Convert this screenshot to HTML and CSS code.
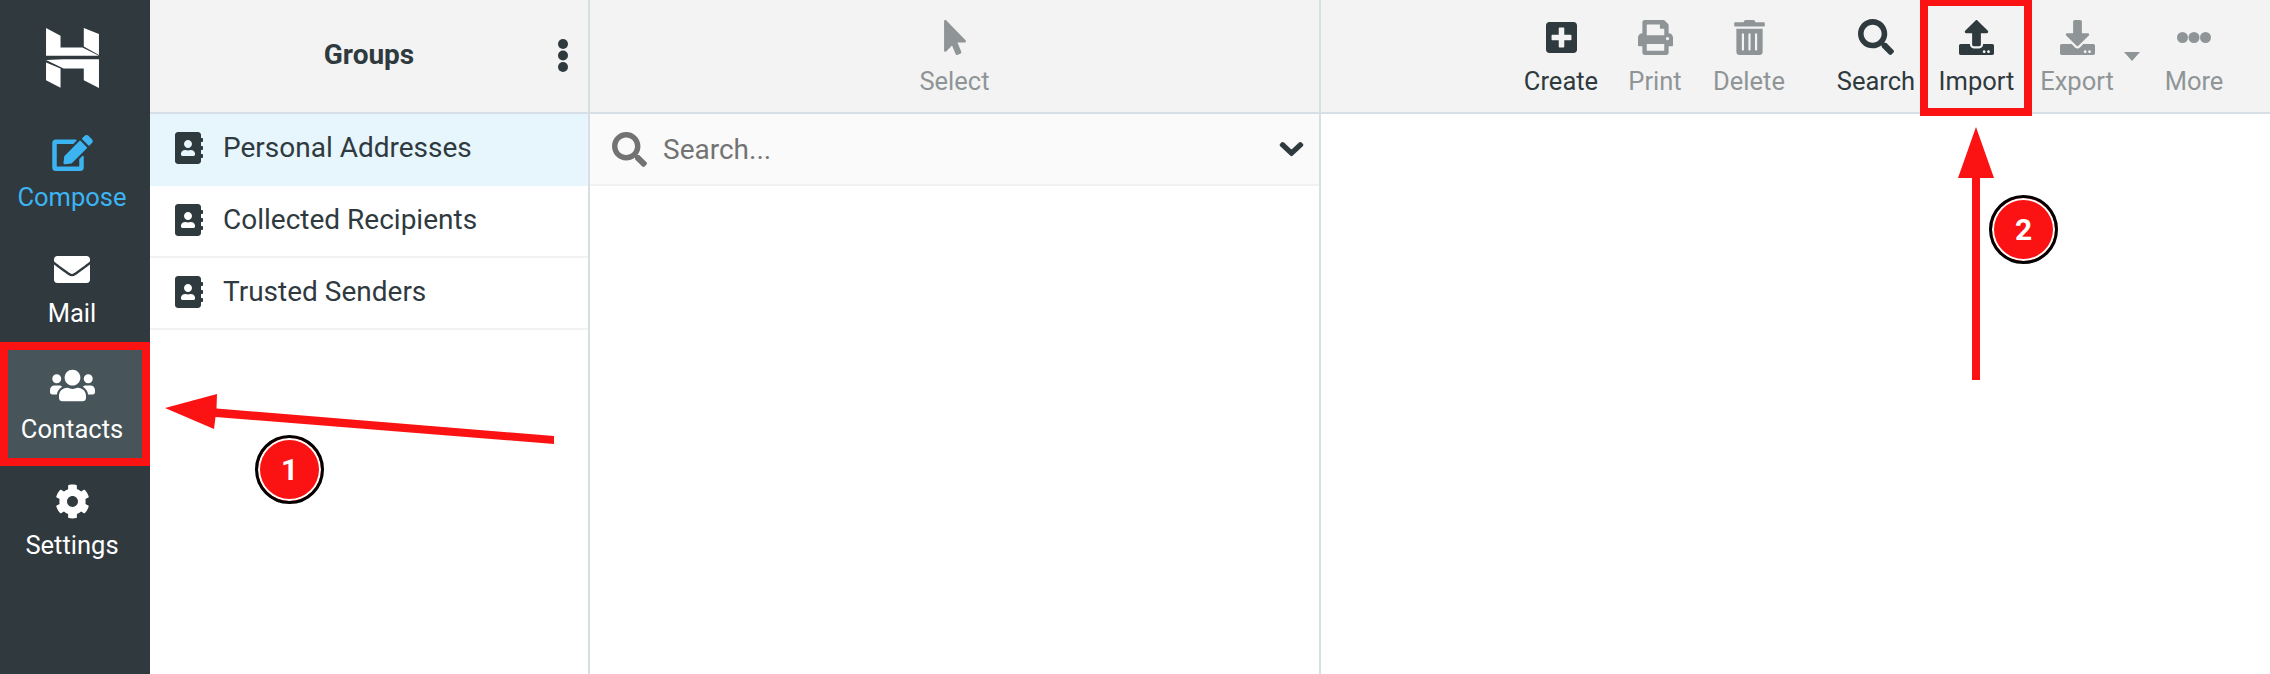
FILE: index.html
```html
<!DOCTYPE html>
<html lang="en">
<head>
<meta charset="utf-8">
<title>Contacts</title>
<link rel="stylesheet" href="styles.css">
</head>
<body>
<div class="app">
  <nav class="sidebar">
    <div class="logo">
      <svg class="logo-svg" viewBox="138 85 157 178"><path d="M138 85l43 23v35h65l49 24H138zM250 85l45 18v62l-45-25zM138 187l43 18v57l-43-22zM138 180l52 25h60v35l45 23v-85H190z"/></svg>
    </div>
    <a class="nav-item nav-compose">
      <span class="nav-icon"><svg class="i-compose" viewBox="0 0 576 512"><path d="M402.6 83.2l90.2 90.2c3.8 3.8 3.8 10 0 13.8L274.4 405.6l-92.8 10.3c-12.4 1.4-22.9-9.1-21.5-21.5l10.3-92.8L388.8 83.2c3.8-3.8 10-3.8 13.8 0zm162-22.9l-48.8-48.8c-15.2-15.2-39.9-15.2-55.2 0l-35.4 35.4c-3.8 3.8-3.8 10 0 13.8l90.2 90.2c3.8 3.8 10 3.8 13.8 0l35.4-35.4c15.2-15.3 15.2-40 0-55.2zM384 346.2V448H64V128h229.8c3.2 0 6.2-1.3 8.5-3.5l40-40c7.6-7.6 2.2-20.5-8.5-20.5H48C21.5 64 0 85.5 0 112v352c0 26.5 21.5 48 48 48h352c26.5 0 48-21.5 48-48V306.2c0-10.7-12.9-16-20.5-8.5l-40 40c-2.2 2.3-3.5 5.3-3.5 8.5z"/></svg></span>
      <span class="nav-label">Compose</span>
    </a>
    <a class="nav-item">
      <span class="nav-icon"><svg class="i-mail" viewBox="0 64 512 384"><path d="M502.3 190.8c3.9-3.1 9.7-.2 9.7 4.7V400c0 26.5-21.5 48-48 48H48c-26.5 0-48-21.5-48-48V195.6c0-5 5.7-7.8 9.7-4.7 22.4 17.4 52.1 39.5 154.1 113.6 21.1 15.4 56.7 47.8 92.2 47.6 35.7.3 72-32.8 92.3-47.6 102-74.1 131.6-96.3 154-113.7zM256 320c23.2.4 56.6-29.2 73.4-41.4 132.7-96.3 142.8-104.7 173.4-128.7 5.8-4.5 9.2-11.5 9.2-18.9v-19c0-26.5-21.5-48-48-48H48C21.5 64 0 85.5 0 112v19c0 7.4 3.4 14.3 9.2 18.9 30.6 23.9 40.7 32.4 173.4 128.7 16.8 12.2 50.2 41.8 73.4 41.4z"/></svg></span>
      <span class="nav-label">Mail</span>
    </a>
    <a class="nav-item nav-active">
      <span class="nav-icon"><svg class="i-users" viewBox="0 32 640 448"><path d="M96 224c35.3 0 64-28.7 64-64s-28.7-64-64-64-64 28.7-64 64 28.7 64 64 64zm448 0c35.3 0 64-28.7 64-64s-28.7-64-64-64-64 28.7-64 64 28.7 64 64 64zm32 32h-64c-17.6 0-33.5 7.1-45.1 18.6 40.3 22.1 68.9 62 75.1 109.4h66c17.7 0 32-14.3 32-32v-32c0-35.3-28.7-64-64-64zm-256 0c61.9 0 112-50.1 112-112S381.9 32 320 32 208 82.1 208 144s50.1 112 112 112zm76.8 32h-8.3c-20.8 10-43.9 16-68.5 16s-47.6-6-68.5-16h-8.3C179.6 288 128 339.6 128 403.2V432c0 26.5 21.5 48 48 48h288c26.5 0 48-21.5 48-48v-28.8c0-63.6-51.6-115.2-115.2-115.2zm-223.7-13.4C161.5 263.1 145.6 256 128 256H64c-35.3 0-64 28.7-64 64v32c0 17.7 14.3 32 32 32h65.9c6.3-47.4 34.9-87.3 75.2-109.4z"/></svg></span>
      <span class="nav-label">Contacts</span>
    </a>
    <a class="nav-item">
      <span class="nav-icon"><svg class="i-cog" viewBox="0 0 512 512"><path d="M487.4 315.7l-42.6-24.6c4.3-23.2 4.3-47 0-70.2l42.6-24.6c4.9-2.8 7.1-8.6 5.5-14-11.1-35.6-30-67.8-54.7-94.6-3.8-4.1-10-5.1-14.8-2.3L380.8 110c-17.9-15.4-38.5-27.3-60.8-35.1V25.8c0-5.6-3.9-10.5-9.4-11.7-36.7-8.2-74.3-7.8-109.2 0-5.5 1.2-9.4 6.1-9.4 11.7V75c-22.2 7.9-42.8 19.8-60.8 35.1L88.7 85.5c-4.9-2.8-11-1.9-14.8 2.3-24.7 26.7-43.6 58.9-54.7 94.6-1.7 5.4.6 11.2 5.5 14L67.3 221c-4.3 23.2-4.3 47 0 70.2l-42.6 24.6c-4.9 2.8-7.1 8.6-5.5 14 11.1 35.6 30 67.8 54.7 94.6 3.8 4.1 10 5.1 14.8 2.3l42.6-24.6c17.9 15.4 38.5 27.3 60.8 35.1v49.2c0 5.6 3.9 10.5 9.4 11.7 36.7 8.2 74.3 7.8 109.2 0 5.5-1.2 9.4-6.1 9.4-11.7v-49.2c22.2-7.9 42.8-19.8 60.8-35.1l42.6 24.6c4.9 2.8 11 1.9 14.8-2.3 24.7-26.7 43.6-58.9 54.7-94.6 1.5-5.5-.7-11.3-5.6-14.1zM256 336c-44.1 0-80-35.9-80-80s35.9-80 80-80 80 35.9 80 80-35.9 80-80 80z"/></svg></span>
      <span class="nav-label">Settings</span>
    </a>
  </nav>

  <section class="col col-groups">
    <header class="col-head groups-head">
      <h2 class="groups-title">Groups</h2>
      <svg class="i-dots" viewBox="0 0 10 33"><circle cx="5" cy="5" r="5"/><circle cx="5" cy="16.5" r="5"/><circle cx="5" cy="28" r="5"/></svg>
    </header>
    <ul class="group-list">
      <li class="group-row group-row-active"><svg class="i-book" viewBox="0 0 448 512"><use href="#book"/></svg><span>Personal Addresses</span></li>
      <li class="group-row"><svg class="i-book" viewBox="0 0 448 512"><use href="#book"/></svg><span>Collected Recipients</span></li>
      <li class="group-row"><svg class="i-book" viewBox="0 0 448 512"><use href="#book"/></svg><span>Trusted Senders</span></li>
    </ul>
  </section>

  <section class="col col-list">
    <header class="col-head list-head">
      <button class="tool tool-off">
        <span class="tool-icon"><svg class="i-pointer" viewBox="0 0 320 512"><path d="M302.189 329.126H196.105l55.831 135.993c3.889 9.428-.555 19.999-9.444 23.999l-49.165 21.427c-9.165 4-19.443-.571-23.332-9.714l-53.053-129.136-86.664 89.138C18.729 472.71 0 463.554 0 447.977V18.299C0 1.899 19.921-6.096 30.277 5.443l284.412 292.542c11.472 11.179 3.007 31.141-12.5 31.141z"/></svg></span>
        <span class="tool-label">Select</span>
      </button>
    </header>
    <div class="search-row">
      <svg class="i-search-field" viewBox="0 0 512 512"><use href="#search"/></svg>
      <span class="search-text">Search...</span>
      <svg class="i-chevron" viewBox="0 110 448 290" preserveAspectRatio="none"><path d="M207.029 381.476L12.686 187.132c-9.373-9.373-9.373-24.569 0-33.941l22.667-22.667c9.357-9.357 24.522-9.375 33.901-.04L224 284.505l154.745-154.021c9.379-9.335 24.544-9.317 33.901.04l22.667 22.667c9.373 9.373 9.373 24.569 0 33.941L240.971 381.476c-9.373 9.372-24.569 9.372-33.942 0z"/></svg>
    </div>
  </section>

  <section class="col col-detail">
    <header class="col-head toolbar">
      <button class="tool">
        <span class="tool-icon"><svg class="i-plus" viewBox="0 32 448 448"><path d="M400 32H48C21.5 32 0 53.5 0 80v352c0 26.5 21.5 48 48 48h352c26.5 0 48-21.5 48-48V80c0-26.5-21.5-48-48-48zm-32 252c0 6.6-5.4 12-12 12h-92v92c0 6.6-5.4 12-12 12h-56c-6.6 0-12-5.4-12-12v-92H92c-6.6 0-12-5.4-12-12v-56c0-6.6 5.4-12 12-12h92v-92c0-6.6 5.4-12 12-12h56c6.6 0 12 5.4 12 12v92h92c6.6 0 12 5.4 12 12v56z"/></svg></span>
        <span class="tool-label">Create</span>
      </button>
      <button class="tool tool-off">
        <span class="tool-icon"><svg class="i-print" viewBox="0 0 512 512"><path d="M448 192V77.25c0-8.49-3.37-16.62-9.37-22.63L393.37 9.37c-6-6-14.14-9.37-22.63-9.37H96C78.33 0 64 14.33 64 32v160c-35.35 0-64 28.65-64 64v112c0 8.84 7.16 16 16 16h48v96c0 17.67 14.33 32 32 32h320c17.67 0 32-14.33 32-32v-96h48c8.84 0 16-7.16 16-16V256c0-35.35-28.65-64-64-64zm-64 256H128v-96h256v96zm0-224H128V64h192v48c0 8.84 7.16 16 16 16h48v96zm48 72c-13.25 0-24-10.75-24-24 0-13.26 10.75-24 24-24s24 10.74 24 24c0 13.25-10.75 24-24 24z"/></svg></span>
        <span class="tool-label">Print</span>
      </button>
      <button class="tool tool-off">
        <span class="tool-icon"><svg class="i-trash" viewBox="0 0 448 512"><path d="M32 464a48 48 0 0 0 48 48h288a48 48 0 0 0 48-48V128H32zm272-256a16 16 0 0 1 32 0v224a16 16 0 0 1-32 0zm-96 0a16 16 0 0 1 32 0v224a16 16 0 0 1-32 0zm-96 0a16 16 0 0 1 32 0v224a16 16 0 0 1-32 0zM432 32H312l-9.4-18.7A24 24 0 0 0 281.1 0H166.8a23.72 23.72 0 0 0-21.4 13.3L136 32H16A16 16 0 0 0 0 48v32a16 16 0 0 0 16 16h416a16 16 0 0 0 16-16V48a16 16 0 0 0-16-16z"/></svg></span>
        <span class="tool-label">Delete</span>
      </button>
      <button class="tool tool-search">
        <span class="tool-icon"><svg class="i-search" viewBox="0 0 512 512"><use href="#search"/></svg></span>
        <span class="tool-label">Search</span>
      </button>
      <button class="tool tool-import">
        <span class="tool-icon"><svg class="i-load" viewBox="0 0 512 512"><path d="M296 384h-80c-13.3 0-24-10.7-24-24V192h-87.7c-17.8 0-26.7-21.5-14.1-34.1L242.3 5.7c7.5-7.5 19.8-7.5 27.3 0l152.2 152.2c12.6 12.6 3.7 34.1-14.1 34.1H320v168c0 13.3-10.7 24-24 24zm216-8v112c0 13.3-10.7 24-24 24H24c-13.3 0-24-10.7-24-24V376c0-13.3 10.7-24 24-24h136v8c0 30.9 25.1 56 56 56h80c30.9 0 56-25.1 56-56v-8h136c13.3 0 24 10.7 24 24zm-124 88c0-11-9-20-20-20s-20 9-20 20 9 20 20 20 20-9 20-20zm64 0c0-11-9-20-20-20s-20 9-20 20 9 20 20 20 20-9 20-20z"/></svg></span>
        <span class="tool-label">Import</span>
      </button>
      <button class="tool tool-off tool-export">
        <span class="tool-icon"><svg class="i-load" viewBox="0 0 512 512"><path d="M216 0h80c13.3 0 24 10.7 24 24v168h87.7c17.8 0 26.7 21.5 14.1 34.1L269.7 378.3c-7.5 7.5-19.8 7.5-27.3 0L90.1 226.1c-12.6-12.6-3.7-34.1 14.1-34.1H192V24c0-13.3 10.7-24 24-24zm296 376v112c0 13.3-10.7 24-24 24H24c-13.3 0-24-10.7-24-24V376c0-13.3 10.7-24 24-24h146.7l49 49c20.1 20.1 52.5 20.1 72.6 0l49-49H488c13.3 0 24 10.7 24 24zm-124 88c0-11-9-20-20-20s-20 9-20 20 9 20 20 20 20-9 20-20zm64 0c0-11-9-20-20-20s-20 9-20 20 9 20 20 20 20-9 20-20z"/></svg></span>
        <span class="tool-label">Export</span>
      </button>
      <span class="caret"></span>
      <button class="tool tool-off">
        <span class="tool-icon"><svg class="i-more" viewBox="0 0 34 11"><circle cx="5.5" cy="5.5" r="5.5"/><circle cx="17" cy="5.5" r="5.5"/><circle cx="28.5" cy="5.5" r="5.5"/></svg></span>
        <span class="tool-label">More</span>
      </button>
    </header>
  </section>

  <svg class="defs" aria-hidden="true">
    <symbol id="book" viewBox="0 0 448 512"><path d="M436 160c6.6 0 12-5.4 12-12v-40c0-6.6-5.4-12-12-12h-20V48c0-26.5-21.5-48-48-48H48C21.5 0 0 21.5 0 48v416c0 26.5 21.5 48 48 48h320c26.5 0 48-21.5 48-48v-48h20c6.6 0 12-5.4 12-12v-40c0-6.6-5.4-12-12-12h-20v-64h20c6.6 0 12-5.4 12-12v-40c0-6.6-5.4-12-12-12h-20v-64h20zm-228-32c35.3 0 64 28.7 64 64s-28.7 64-64 64-64-28.7-64-64 28.7-64 64-64zm112 236.8c0 10.6-10 19.2-22.4 19.2H118.4C106 384 96 375.4 96 364.8v-19.2c0-31.8 30.1-57.6 67.2-57.6h5c12.3 5.1 25.7 8 39.8 8s27.6-2.9 39.8-8h5c37.1 0 67.2 25.8 67.2 57.6v19.2z"/></symbol>
    <symbol id="search" viewBox="0 0 512 512"><path d="M505 442.7L405.3 343c-4.5-4.5-10.6-7-17-7H372c27.6-35.3 44-79.7 44-128C416 93.1 322.9 0 208 0S0 93.1 0 208s93.1 208 208 208c48.3 0 92.7-16.4 128-44v16.3c0 6.4 2.5 12.5 7 17l99.7 99.7c9.4 9.4 24.6 9.4 33.9 0l28.3-28.3c9.4-9.4 9.4-24.6.1-34zM208 336c-70.7 0-128-57.2-128-128 0-70.7 57.2-128 128-128 70.7 0 128 57.2 128 128 0 70.7-57.2 128-128 128z"/></symbol>
  </svg>

  <div class="marker marker-contacts"></div>
  <div class="marker marker-import"></div>
  <svg class="arrows" viewBox="0 0 2270 674">
    <path d="M165 408L217 394L216.500 408.500L554 436V444L215.500 417L214 429Z"/>
    <path d="M1976 127L1994 178H1980V380H1972V178H1958Z"/>
  </svg>
  <div class="badge badge-one">1</div>
  <div class="badge badge-two">2</div>
</div>
</body>
</html>
```
FILE: styles.css
```css
* { box-sizing: border-box; }
html, body { margin: 0; padding: 0; height: 100%; }
body { background: #fff; color: #2f3a3f; font-family: Roboto, "Liberation Sans", sans-serif; font-size: 25.5px; overflow: hidden; }
svg { display: block; fill: currentColor; }
.app { position: relative; display: flex; width: 2270px; height: 674px; overflow: hidden; }

.sidebar { flex: 0 0 150px; background: #2f393e; color: #fff; padding-right: 6px; }
.logo { height: 114px; padding: 28px 0 0 46px; }
.logo-svg { width: 53px; height: 60px; }
.nav-item { display: flex; flex-direction: column; align-items: center; height: 116px; padding-top: 19px; }
.nav-icon { display: flex; align-items: center; justify-content: center; height: 40px; }
.nav-label { margin-top: 9px; line-height: 30px; }
.nav-compose { color: #3cb4f1; }
.nav-active { background: #47555a; margin-right: -6px; padding-right: 6px; }
.i-compose { width: 41px; height: 36px; }
.i-mail { width: 36px; height: 27px; }
.i-users { width: 45px; height: 33px; }
.i-cog { width: 35px; height: 35px; }

.col { display: flex; flex-direction: column; border-right: 2px solid #d8dfe3; }
.col-groups { flex: 0 0 440px; }
.col-list { flex: 0 0 731px; }
.col-detail { flex: 1; border-right: 0; }
.col-head { height: 114px; flex: none; background: #f3f3f3; border-bottom: 2px solid #d5dfe5; }

.groups-head { display: grid; grid-template-columns: 1fr auto 1fr; align-items: center; padding-bottom: 2px; }
.groups-title { grid-column: 2; margin: 0; font-size: 28px; font-weight: 700; line-height: 30px; }
.i-dots { grid-column: 3; justify-self: end; width: 10px; height: 33px; margin-right: 20px; }

.group-list { list-style: none; margin: 0; padding: 0; }
.group-row { display: flex; align-items: center; height: 72px; padding: 0 0 3px 25px; border-bottom: 2px solid #f2f2f2; font-size: 28px; }
.group-row-active { background: #e7f5fd; border-bottom-color: #e7f5fd; }
.i-book { width: 28px; height: 32px; margin-right: 20px; }

.list-head { display: flex; justify-content: center; }
.search-row { display: flex; align-items: center; height: 72px; padding: 0 16px 0 22px; background: #fafafa; border-bottom: 2px solid #f1f1f1; color: #737373; }
.i-search-field { width: 35px; height: 35px; margin-right: 16px; }
.search-text { flex: 1; font-size: 28px; }
.i-chevron { width: 23px; height: 14px; color: #2f3a3f; stroke: currentColor; stroke-width: 24px; overflow: visible; }

.toolbar { display: flex; justify-content: flex-end; padding-right: 29px; }
.tool { display: flex; flex-direction: column; align-items: center; width: 94px; height: 112px; padding: 17px 0 0; border: 0; background: none; color: #2f3a3f; font: inherit; }
.tool-off { color: #8f9597; }
.tool-icon { display: flex; align-items: center; justify-content: center; height: 40px; }
.tool-label { margin-top: 9px; line-height: 30px; }
.tool-search { margin-left: 33px; }
.tool-import { margin-left: 6.5px; }
.tool-export { margin-left: 6.5px; }
.caret { align-self: flex-start; margin: 52px 7px 0 0; border: 8px solid transparent; border-top: 9px solid #8f9597; border-bottom: 0; }
.i-pointer { width: 22px; height: 35px; }
.i-plus { width: 31px; height: 31px; }
.i-print { width: 35px; height: 35px; }
.i-trash { width: 31px; height: 35px; }
.i-search { width: 36px; height: 36px; }
.i-load { width: 35px; height: 35px; }
.i-more { width: 34px; height: 11px; }

.defs { position: absolute; width: 0; height: 0; }
.marker { position: absolute; border: 8px solid #fb1313; }
.marker-contacts { left: 0; top: 342px; width: 150px; height: 124px; }
.marker-import { left: 1920px; top: -2px; width: 112px; height: 118px; }
.arrows { position: absolute; left: 0; top: 0; width: 2270px; height: 674px; fill: #fb1313; pointer-events: none; }
.badge { position: absolute; display: flex; align-items: center; justify-content: center; width: 69px; height: 69px; border-radius: 50%; background: #fb1313; color: #fff; border: 3px solid #000; box-shadow: inset 0 0 0 2px #fff; font-size: 30px; font-weight: 700; }
.badge-one { left: 255px; top: 435px; }
.badge-two { left: 1989px; top: 195px; }
```
